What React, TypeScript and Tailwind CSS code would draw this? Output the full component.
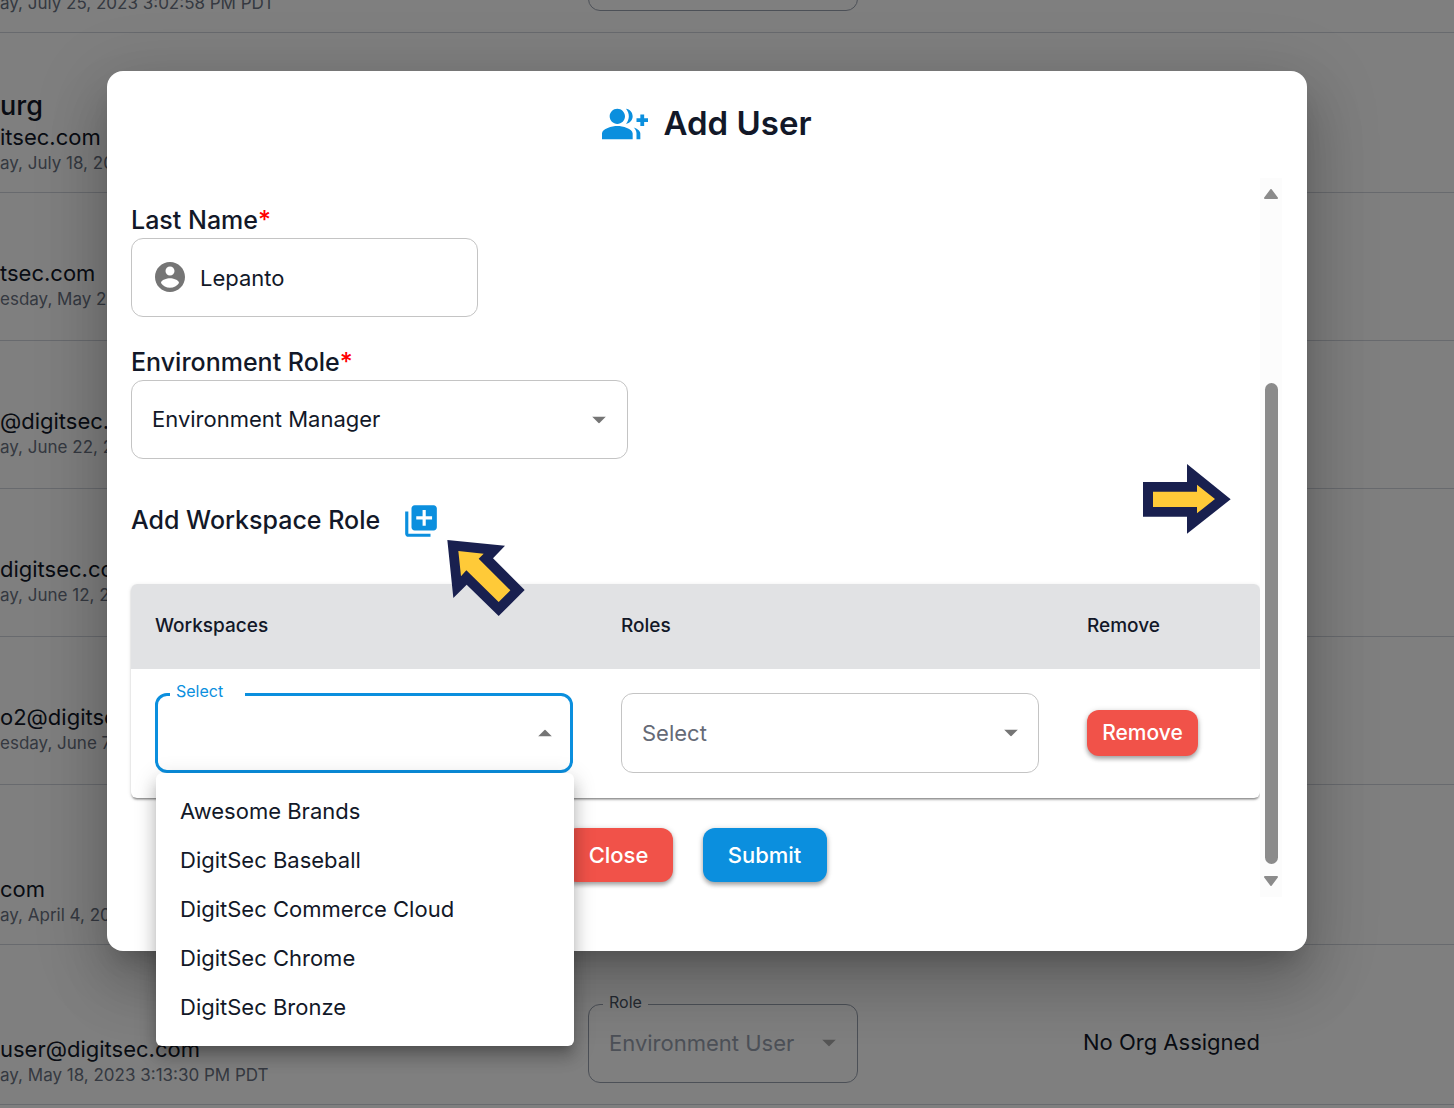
import React, { useState } from 'react';
import clsx from 'clsx';

const USERS = [
    { date: "ay, July 25, 2023 3:02:58 PM PDT", tall: true, role: "Environment User" },
    { name: "urg", email: "itsec.com", date: "ay, July 18, 2023", tall: true },
    { email: "tsec.com", date: "esday, May 23, 2023" },
    { email: "@digitsec.com", date: "ay, June 22, 2023" },
    { email: "digitsec.com", date: "ay, June 12, 2023" },
    { email: "o2@digitsec.com", date: "esday, June 7, 2023" },
    { email: "com", date: "ay, April 4, 2023", tall: true },
    { email: "user@digitsec.com", date: "ay, May 18, 2023 3:13:30 PM PDT", tall: true, role: "Environment User", org: "No Org Assigned" }
];

const WORKSPACES = [
    "Awesome Brands",
    "DigitSec Baseball",
    "DigitSec Commerce Cloud",
    "DigitSec Chrome",
    "DigitSec Bronze"
];

const GROUP_ADD = "M22 9V7h-2v2h-2v2h2v2h2v-2h2V9zM8 12c2.21 0 4-1.79 4-4s-1.79-4-4-4-4 1.79-4 4 1.79 4 4 4zm0 1c-2.67 0-8 1.34-8 4v3h16v-3c0-2.66-5.33-4-8-4zm4.51-8.95C13.43 5.11 14 6.49 14 8s-.57 2.89-1.49 3.95C14.47 11.7 16 10.04 16 8s-1.53-3.7-3.49-3.95zm4.02 9.78C17.42 14.66 18 15.7 18 17v3h2v-3c0-1.45-1.59-2.51-3.47-3.17z";
const ACCOUNT = "M12 2C6.48 2 2 6.48 2 12s4.48 10 10 10 10-4.48 10-10S17.52 2 12 2zm0 3c1.66 0 3 1.34 3 3s-1.34 3-3 3-3-1.34-3-3 1.34-3 3-3zm0 14.2c-2.5 0-4.71-1.28-6-3.22.03-1.99 4-3.08 6-3.08 1.99 0 5.97 1.09 6 3.08-1.29 1.94-3.5 3.22-6 3.22z";
const LIBRARY_ADD = "M4 6H2v14c0 1.1.9 2 2 2h14v-2H4V6zm16-4H8c-1.1 0-2 .9-2 2v12c0 1.1.9 2 2 2h12c1.1 0 2-.9 2-2V4c0-1.1-.9-2-2-2zm-1 9h-4v4h-2v-4H9V9h4V5h2v4h4v2z";

const Icon: React.FC<{ d: string; className: string }> = ({ d, className }) => (
    <svg viewBox="0 0 24 24" fill="currentColor" aria-hidden="true" className={className}>
        <path d={d} />
    </svg>
);

const Caret: React.FC<{ up?: boolean; className?: string }> = ({ up, className }) => (
    <svg viewBox="0 0 14 7" aria-hidden="true" className={clsx('pointer-events-none absolute top-1/2 h-[7px] w-[14px] -translate-y-1/2', className)}>
        <path d={up ? 'M0 7 7 0l7 7z' : 'M0 0l7 7 7-7z'} fill="#757575" />
    </svg>
);

const UserTable: React.FC = () => (
    <table className="-mt-32 w-full table-fixed border-collapse">
        <colgroup>
            <col className="w-[588px]" />
            <col className="w-[495px]" />
            <col />
        </colgroup>
        <tbody>
            {USERS.map((user, i) => (
                <tr key={i} className={clsx('border-b border-gray-300', user.tall ? 'h-40' : 'h-[148px]')}>
                    <td className={clsx('overflow-hidden align-bottom whitespace-nowrap', user.tall ? 'pb-4' : 'pb-7')}>
                        {user.name && <div className="text-[27px] leading-9 font-medium">{user.name}</div>}
                        {user.email && <div className="text-[22px] leading-[26px]">{user.email}</div>}
                        <div className="text-[17px] leading-[26px] text-gray-500">{user.date}</div>
                    </td>
                    <td className="pb-[21px] align-bottom">
                        {user.role && (
                            <div className="relative w-[270px]">
                                <label htmlFor={`role-${i}`} className="absolute -top-3 left-[15px] bg-white px-1.5 text-[16px] leading-5 text-gray-600">Role</label>
                                <select id={`role-${i}`} disabled className="block h-[79px] w-full appearance-none rounded-xl border border-gray-400 bg-transparent px-5 text-[22px] text-gray-400 opacity-100">
                                    <option>{user.role}</option>
                                </select>
                                <Caret className="right-[22px] opacity-60" />
                            </div>
                        )}
                    </td>
                    <td className="pt-9 text-[22px]">{user.org}</td>
                </tr>
            ))}
        </tbody>
    </table>
);

const Scrollbar: React.FC = () => (
    <div aria-hidden="true" className="mr-px flex w-[22px] shrink-0 flex-col items-center bg-[#fcfcfc] py-[11px]">
        <svg viewBox="0 0 14 10" className="h-[10px] w-[14px]">
            <path d="M7 1 13 9H1z" fill="#8b8b8b" stroke="#8b8b8b" strokeWidth="2" strokeLinejoin="round" />
        </svg>
        <div className="mt-auto mb-3 h-[481px] w-[13px] rounded-full bg-[#8b8b8b]" />
        <svg viewBox="0 0 14 10" className="h-[10px] w-[14px]">
            <path d="M1 1h12L7 9z" fill="#8b8b8b" stroke="#8b8b8b" strokeWidth="2" strokeLinejoin="round" />
        </svg>
    </div>
);

const BUTTON = 'rounded-xl font-medium text-white shadow-[0_3px_4px_rgba(0,0,0,0.28),0_1px_6px_rgba(0,0,0,0.16)]';
const FIELD = 'w-full appearance-none rounded-xl border border-[#c4c4c4] bg-transparent';

const App: React.FC = () => {
    const [lastName, setLastName] = useState('Lepanto');

    return (
        <div className="relative h-screen overflow-hidden bg-white font-[Inter,sans-serif] text-[#121828]">
            <UserTable />

            <div className="absolute inset-0 flex items-start justify-center bg-black/50 pt-[71px] pr-10">
                <div role="dialog" aria-labelledby="dialog-title" className="relative w-full max-w-[1200px] rounded-2xl bg-white px-6 pb-[54px] shadow-[0_17px_23px_-11px_rgba(0,0,0,0.2),0_36px_57px_5px_rgba(0,0,0,0.14),0_14px_69px_12px_rgba(0,0,0,0.12)]">
                    <h2 id="dialog-title" className="flex h-[107px] items-center justify-center gap-[15px] pb-0.5 text-[33px] leading-none font-semibold">
                        <Icon d={GROUP_ADD} className="size-[46px] text-[#0b8fde]" />
                        Add User
                    </h2>

                    <div className="flex">
                        <form className="min-w-0 flex-1 pt-6 pb-[15px]" onSubmit={e => e.preventDefault()}>
                            <label htmlFor="last-name" className="block text-[25px] leading-9 font-medium">Last Name<span className="text-[#ff0000]">*</span></label>
                            <div className="relative w-[347px]">
                                <Icon d={ACCOUNT} className="absolute top-[21px] left-[21px] size-9 text-[#757575]" />
                                <input id="last-name" value={lastName} onChange={e => setLastName(e.target.value)} className={clsx(FIELD, 'h-[79px] pr-5 pl-[68px] text-[22px]')} />
                            </div>

                            <label htmlFor="env-role" className="mt-[27px] block text-[25px] leading-9 font-medium">Environment Role<span className="text-[#ff0000]">*</span></label>
                            <div className="relative w-[497px]">
                                <select id="env-role" className={clsx(FIELD, 'h-[79px] px-5 text-[22px]')}>
                                    <option>Environment Manager</option>
                                </select>
                                <Caret className="right-[22px]" />
                            </div>

                            <div className="mt-11 flex h-9 items-center gap-[22px]">
                                <span className="text-[25px] font-medium">Add Workspace Role</span>
                                <button type="button" aria-label="Add workspace role" className="text-[#0b8fde]">
                                    <Icon d={LIBRARY_ADD} className="size-[38px]" />
                                </button>
                            </div>

                            <table className="mt-[45px] w-full table-fixed rounded-md shadow-[0_3px_2px_-2px_rgba(0,0,0,0.3),0_2px_2px_rgba(0,0,0,0.18),0_1px_4px_rgba(0,0,0,0.1)]">
                                <colgroup>
                                    <col className="w-[466px]" />
                                    <col className="w-[466px]" />
                                    <col />
                                </colgroup>
                                <thead>
                                    <tr className="h-[85px] bg-[#e1e2e4] text-left text-[19px]">
                                        <th className="rounded-tl-md px-6 font-medium">Workspaces</th>
                                        <th className="px-6 font-medium">Roles</th>
                                        <th className="rounded-tr-md px-6 font-medium">Remove</th>
                                    </tr>
                                </thead>
                                <tbody>
                                    <tr className="h-[129px] align-top">
                                        <td className="px-6 pt-6">
                                            <div className="relative">
                                                <select id="workspace" defaultValue="" className="block h-20 w-full appearance-none rounded-xl border-3 border-[#0b8fde] bg-transparent px-5 text-[22px]">
                                                    <option value="" />
                                                    {WORKSPACES.map(w => <option key={w}>{w}</option>)}
                                                </select>
                                                <label htmlFor="workspace" className="absolute -top-3 left-[15px] w-[75px] bg-white px-1.5 text-[16px] leading-5 text-[#0b8fde]">Select</label>
                                                <Caret up className="right-[21px]" />
                                                <ul role="listbox" aria-label="Workspaces" className="absolute top-full left-px z-10 w-full rounded-md bg-white py-3.5 shadow-[0_8px_8px_-5px_rgba(0,0,0,0.2),0_12px_15px_2px_rgba(0,0,0,0.14),0_5px_21px_3px_rgba(0,0,0,0.12)]">
                                                    {WORKSPACES.map(w => (
                                                        <li key={w} role="option" aria-selected={false} className="px-6 text-[22px] leading-[49px]">{w}</li>
                                                    ))}
                                                </ul>
                                            </div>
                                        </td>
                                        <td className="px-6 pt-6">
                                            <select aria-label="Role" className={clsx(FIELD, 'block h-20 px-5 text-[22px] text-[#656a76]')}>
                                                <option>Select</option>
                                            </select>
                                            <div className="relative -mt-10">
                                                <Caret className="right-[21px]" />
                                            </div>
                                        </td>
                                        <td className="px-6 pt-[41px]">
                                            <button type="button" className={clsx(BUTTON, 'h-[46px] w-[111px] bg-[#f15249] text-[21px]')}>Remove</button>
                                        </td>
                                    </tr>
                                </tbody>
                            </table>

                            <div className="mt-[30px] flex justify-center gap-[30px]">
                                <button type="button" className={clsx(BUTTON, 'h-[54px] w-[108px] bg-[#f15249] text-[22px]')}>Close</button>
                                <button type="submit" className={clsx(BUTTON, 'h-[54px] w-[124px] bg-[#0b8fde] text-[22px]')}>Submit</button>
                            </div>
                        </form>
                        <Scrollbar />
                    </div>

                    {/* Walkthrough pointers */}
                    <svg viewBox="0 0 234 228" aria-hidden="true" className="absolute top-[469px] left-[340px] h-[76px] w-[78px]">
                        <path d="M1 0 174 17 138 55 233 150 155 228 59 134 19 174z" fill="#19204f" />
                        <path d="M34 33 110 41 95 56 190 151 155 186 58 91 42 109z" fill="#ffca38" />
                    </svg>
                    <svg viewBox="0 0 264 210" aria-hidden="true" className="absolute top-[393px] right-[76px] h-[70px] w-[88px]">
                        <path d="M0 54H132V0L263 106 132 209V158H0z" fill="#19204f" />
                        <path d="M30 83H162V62L216 105 162 148V129H30z" fill="#ffca38" />
                    </svg>
                </div>
            </div>
        </div>
    );
};

export default App;
